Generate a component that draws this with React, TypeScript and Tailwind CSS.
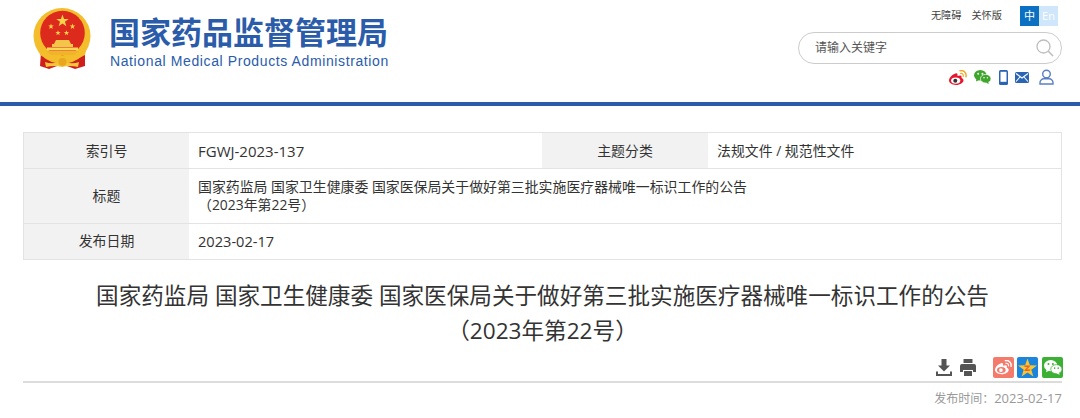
import React from "react";

const font = { fontFamily: '"Open Sans","Noto Sans CJK SC",sans-serif' };

function star(cx: number, cy: number, r: number) {
  let d = "";
  for (let i = 0; i < 10; i++) {
    const a = -Math.PI / 2 + (i * Math.PI) / 5;
    const rr = i % 2 ? r * 0.4 : r;
    d += (i ? "L" : "M") + (cx + rr * Math.cos(a)).toFixed(2) + " " + (cy + rr * Math.sin(a)).toFixed(2);
  }
  return d + "Z";
}

function Emblem() {
  return (
    <svg width="58" height="61" viewBox="0 0 58 61" className="shrink-0">
      <path d="M8 44 L7 58 L16 61 L24 58 L34 58 L42 61 L52 58 L52 44 Z" fill="#cf1f1c" />
      <ellipse cx="29" cy="28" rx="28.500" ry="28" fill="#f4bd2c" />
      <circle cx="29.500" cy="25" r="22.300" fill="#dc2a1c" />
      <path d={star(29.500, 13, 6.500)} fill="#f8d24a" />
      <path d={star(18, 18.500, 3)} fill="#f8d24a" />
      <path d={star(39.500, 18.500, 3)} fill="#f8d24a" />
      <path d={star(25, 25, 2.800)} fill="#f8d24a" />
      <path d={star(33.500, 25, 2.800)} fill="#f8d24a" />
      <path d="M23 32 h13 l2 4 h-17z" fill="#f3c64a" />
      <rect x="19" y="36" width="21" height="3" fill="#f3c64a" />
      <rect x="14" y="39.500" width="31" height="3" fill="#f9d65a" />
      <path d="M13 43 h33 l-5 4 h-23z" fill="#f0b429" />
      <path d="M6 42 q23 16 47 0 l-1 5 q-22 13 -45 0z" fill="#f4bd2c" />
      <path d="M12 54 q8 3 17 -1 q9 4 17 1 l-1 5 q-8 -2 -16 0 q-8 -2 -16 0z" fill="#f4c63a" />
      <circle cx="29.500" cy="54" r="4" fill="#e9a71f" />
    </svg>
  );
}

function Weibo({ size = 18, body = "#e6162d", eye = "#fff", pupil = "#333", wave = "#f5a623" }: { size?: number; body?: string; eye?: string; pupil?: string; wave?: string }) {
  return (
    <svg width={size} height={(size * 15) / 18} viewBox="0 0 18 15">
      <path d="M6.500 3.500 C3.500 4.500 0 7.500 0 10.300 C0 13 3.200 15 7 15 C11.300 15 14.500 12.500 14.500 10.500 C14.500 9 13.300 8.400 12.500 8.100 C13 6.800 12.700 5.700 11.300 5.500 C10.300 5.400 9.200 5.900 8.500 6.100 C8.900 4.300 8.200 2.600 6.500 3.500Z" fill={body} />
      <ellipse cx="6.700" cy="10.600" rx="4.600" ry="3.200" fill={eye} />
      <circle cx="6.300" cy="10.700" r="2" fill={pupil} />
      <path d="M11 .7 a5 5 0 0 1 6 6" stroke={wave} strokeWidth="1.500" fill="none" strokeLinecap="round" />
      <path d="M11.500 3.500 a2.300 2.300 0 0 1 2.800 2.800" stroke={wave} strokeWidth="1.200" fill="none" strokeLinecap="round" />
    </svg>
  );
}

function Wechat({ fill = "#3fa52c", eye = "#fff", w = 17, sep = "#fff" }: { fill?: string; eye?: string; w?: number; sep?: string }) {
  return (
    <svg width={w} height={(w * 14) / 17} viewBox="0 0 17 14">
      <ellipse cx="6.300" cy="5.300" rx="6.300" ry="5.300" fill={fill} />
      <path d="M2.500 8.500 L2 11.500 L5.500 9.800z" fill={fill} />
      <ellipse cx="11.700" cy="8.700" rx="5.300" ry="4.300" fill={fill} stroke={sep} strokeWidth="0.700" />
      <path d="M14 11.500 L14.800 14 L12 12.700z" fill={fill} />
      <circle cx="4.200" cy="3.800" r=".95" fill={eye} />
      <circle cx="8.400" cy="3.800" r=".95" fill={eye} />
      <circle cx="10" cy="7.700" r=".75" fill={eye} />
      <circle cx="13.400" cy="7.700" r=".75" fill={eye} />
    </svg>
  );
}

const labelCls = "bg-[#f2f2f2] flex items-center justify-center text-[13.9px] text-[#333]";
const valueCls = "bg-white flex items-center pl-[9px] text-[13.9px] text-[#333]";

export default function App() {
  return (
    <div className="w-[1080px] h-[418px] overflow-hidden bg-white" style={font}>
      <header className="h-[106px] border-b-[4px] border-[#2b5bab] flex justify-between">
        <div className="flex pl-[33px] pt-[8px]">
          <Emblem />
          <div className="ml-[18px] text-[#2a5caa]">
            <div className="text-[31px] leading-[37px] mt-[6px] font-bold whitespace-nowrap">国家药品监督管理局</div>
            <div className="text-[14px] leading-[18px] mt-[1px] ml-[1px] whitespace-nowrap tracking-[0.61px]" style={{ fontFamily: '"Liberation Sans",sans-serif' }}>
              National Medical Products Administration
            </div>
          </div>
        </div>
        <div className="w-[264px] mr-[18px] flex flex-col">
          <div className="flex items-center justify-end pt-[6px] h-[26px]">
            <span className="text-[10.200px] text-[#444] mr-[10px]">无障碍</span>
            <span className="text-[10.200px] text-[#444] mr-[18px]">关怀版</span>
            <span className="w-[19px] h-[20px] bg-[#0b6fc2] text-white text-[11px] flex items-center justify-center">中</span>
            <span className="w-[19px] h-[20px] bg-[#cfe6fb] text-white text-[11px] flex items-center justify-center mr-[4px]">En</span>
          </div>
          <div className="mt-[6px] h-[32px] w-[264px] rounded-full border border-[#cccccc] flex items-center justify-between pl-[16px] pr-[7px]">
            <span className="text-[12px] text-[#555]">请输入关键字</span>
            <svg width="18" height="18" viewBox="0 0 18 18" fill="none" stroke="#bdbdbd" strokeWidth="1.300">
              <circle cx="7.500" cy="7.500" r="6.500" />
              <path d="M12.300 12.300 L17 17" strokeWidth="1.600" />
            </svg>
          </div>
          <div className="flex items-center justify-end mt-[3px] h-[20px] pr-[8px]">
            <Weibo size={18} />
            <span className="ml-[7px] flex"><Wechat /></span>
            <svg className="ml-[8px]" width="9" height="15" viewBox="0 0 9 15">
              <rect width="9" height="15" rx="1.500" fill="#2b64b5" />
              <rect x="1.500" y="1.800" width="6" height="10" fill="#fff" />
            </svg>
            <svg className="ml-[7px]" width="14" height="11" viewBox="0 0 14 11">
              <rect width="14" height="11" rx="1.500" fill="#2b64b5" />
              <path d="M1 1.500 L7 6 L13 1.500 M1 9.500 L5 5 M13 9.500 L9 5" stroke="#fff" strokeWidth="1.100" fill="none" />
            </svg>
            <svg className="ml-[10px]" width="15" height="16" viewBox="0 0 15 16" fill="none" stroke="#5a7fc4" strokeWidth="1.400">
              <circle cx="7.500" cy="5" r="3.800" />
              <path d="M1 15 v-1.500 c0-2.500 2.500-3.800 3.500-3.800 h6 c1 0 3.500 1.300 3.500 3.800 v1.500 z" />
            </svg>
          </div>
        </div>
      </header>

      <main className="pl-[23px] pt-[26px]">
        <div className="w-[1039px] grid grid-cols-[165px_353px_166px_353px] grid-rows-[35px_54px_35px] bg-[#e3e3e3] gap-y-[1px] border border-[#e3e3e3]">
          <div className={labelCls + " pt-[2px]"}>索引号</div>
          <div className={valueCls + " text-[15px] pt-[2px]"}>FGWJ-2023-137</div>
          <div className={labelCls + " pt-[2px]"}>主题分类</div>
          <div className={valueCls + " pt-[2px]"}>法规文件 / 规范性文件</div>
          <div className={labelCls}>标题</div>
          <div className={valueCls + " col-span-3 leading-[18px]"}>
            <div>
              国家药监局 国家卫生健康委 国家医保局关于做好第三批实施医疗器械唯一标识工作的公告
              <br />
              （2023年第22号）
            </div>
          </div>
          <div className={labelCls}>发布日期</div>
          <div className={valueCls + " col-span-3 text-[14.600px]"}>2023-02-17</div>
        </div>

        <h1 className="w-[1039px] mt-[18px] text-center text-[22.600px] leading-[35px] font-normal text-[#333]">
          国家药监局 国家卫生健康委 国家医保局关于做好第三批实施医疗器械唯一标识工作的公告
          <br />
          （2023年第22号）
        </h1>

        <div className="w-[1040px] h-[21px] mt-[9px] flex items-center justify-end">
          <svg width="16" height="17" viewBox="0 0 16 17" fill="#555">
            <path d="M5.500 0 h5 v6.500 h3.500 L8 12.500 L2 6.500 h3.500z" />
            <path d="M0 12.500 h2 v2.500 h12 v-2.500 h2 v4.500 h-16z" />
          </svg>
          <svg className="ml-[8px]" width="16" height="17" viewBox="0 0 16 17" fill="#555">
            <rect x="3.500" y="0" width="9" height="4" rx="0.500" />
            <path d="M2 5 h12 a2 2 0 0 1 2 2 v6 h-3 v-2 h-10 v2 h-3 v-6 a2 2 0 0 1 2-2z" />
            <rect x="4" y="12" width="8" height="5" />
          </svg>
          <div className="ml-[17px] w-[21px] h-[21px] rounded-[2px] bg-[#f47a6c] flex items-center justify-center">
            <Weibo size={17} body="#fff" eye="#f47a6c" pupil="#fff" wave="#fff" />
          </div>
          <div className="ml-[3px] w-[21px] h-[21px] rounded-[2px] bg-[#1b84dc] flex items-center justify-center">
            <svg width="19" height="18" viewBox="0 0 19 18">
              <path d={star(9.500, 9.500, 10)} fill="#fbc531" />
              <path d="M6.500 6.500 h6 l-3.500 4 h3.500 l-1 1.500 h-5.500 l3.500-4 h-3z" fill="#e8632a" />
            </svg>
          </div>
          <div className="ml-[4px] w-[21px] h-[21px] rounded-[2px] bg-[#3cb034] flex items-center justify-center">
            <Wechat fill="#fff" eye="#3cb034" w={18} sep="#3cb034" />
          </div>
        </div>
        <div className="w-[1039px] h-[2px] mt-[3px] bg-[#dcdcdc]" />
        <div className="w-[1039px] text-right text-[12px] leading-[18px] mt-[6px] text-[#999]">
          发布时间：<span className="text-[13px]">2023-02-17</span>
        </div>
      </main>
    </div>
  );
}
